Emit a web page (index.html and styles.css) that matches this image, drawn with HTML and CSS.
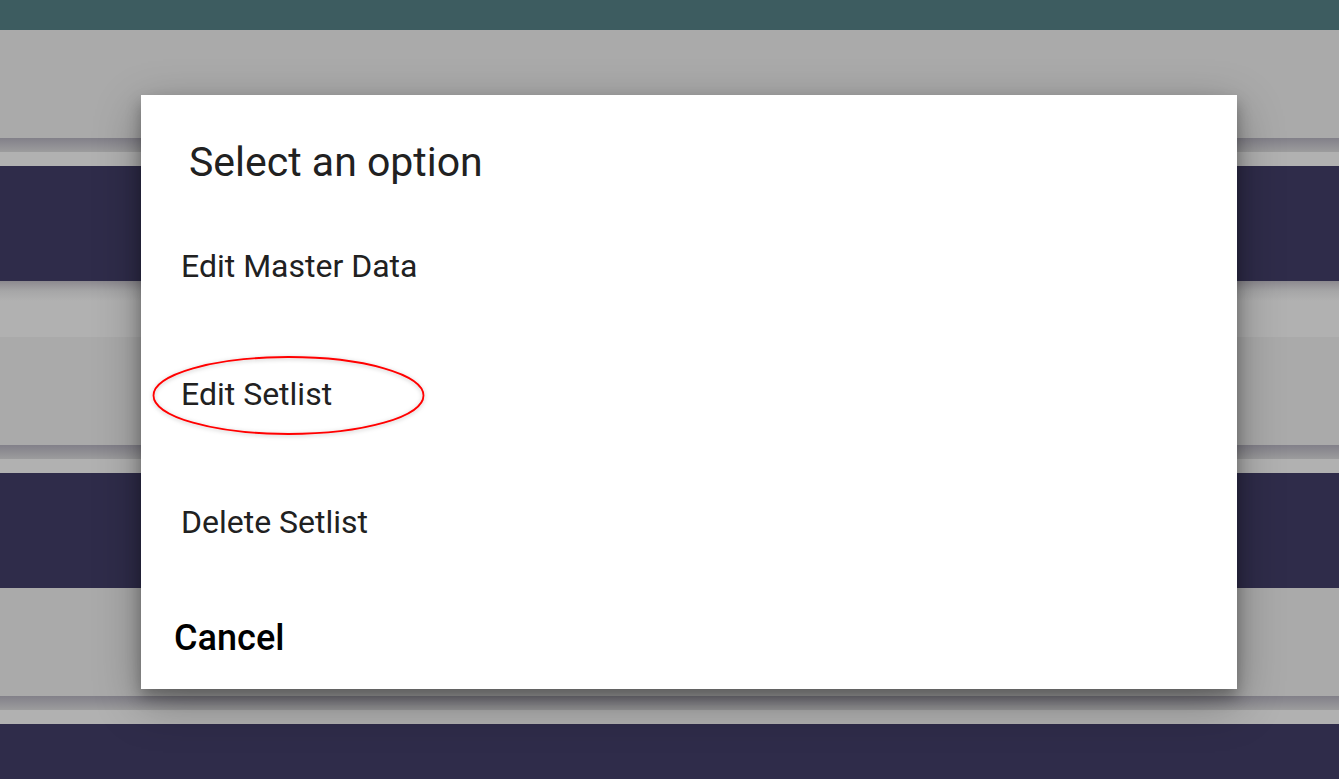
FILE: index.html
```html
<!DOCTYPE html>
<html>
<head>
<meta charset="utf-8">
<link rel="stylesheet" href="styles.css">
</head>
<body>
<div class="screen">
  <div class="topbar"></div>
  <div class="card"></div>
  <div class="band"></div>
  <div class="strip"></div>
  <div class="navy"></div>
  <div class="card-light"></div>
  <div class="card"></div>
  <div class="band"></div>
  <div class="strip"></div>
  <div class="navy"></div>
  <div class="card"></div>
  <div class="band"></div>
  <div class="strip"></div>
  <div class="navy navy-end"></div>
</div>

<div class="dialog">
  <div class="dialog-title">Select an option</div>
  <div class="options">
    <div class="option">Edit Master Data</div>
    <div class="option">Edit Setlist</div>
    <div class="option">Delete Setlist</div>
  </div>
  <div class="actions">
    <span class="cancel">Cancel</span>
  </div>
</div>

<svg class="marker" width="280" height="86" viewBox="0 0 280 86">
  <defs>
    <filter id="soft" x="-10%" y="-20%" width="120%" height="140%">
      <feDropShadow dx="0" dy="1" stdDeviation="2" flood-color="#000" flood-opacity="0.25"/>
    </filter>
  </defs>
  <ellipse cx="135.5" cy="39.5" rx="135" ry="38.5" fill="none" stroke="#ff0000" stroke-width="1.8" filter="url(#soft)"/>
</svg>
</body>
</html>
```

FILE: styles.css
```css
html, body {
  margin: 0;
  padding: 0;
}
body {
  width: 1339px;
  height: 779px;
  overflow: hidden;
  position: relative;
  font-family: Roboto, "Noto Sans", "Liberation Sans", sans-serif;
  background: #2f2c4a;
}
.screen {
  display: flex;
  flex-direction: column;
  height: 779px;
}
.topbar {
  height: 30px;
  background: #3d5c60;
  flex: none;
}
.card {
  height: 108px;
  background: #aaaaaa;
  flex: none;
}
.card-light {
  height: 56px;
  flex: none;
  background: linear-gradient(#8c898f 0px, #a6a6a7 10px, #b1b1b1 20px, #b1b1b1 100%);
}
.band {
  height: 14px;
  flex: none;
  background: linear-gradient(#828089, #9c9c9d);
}
.strip {
  height: 14px;
  flex: none;
  background: #b1b1b1;
}
.navy {
  height: 115px;
  flex: none;
  background: #2f2c4a;
}
.navy-end {
  flex: 1;
}

.dialog {
  position: absolute;
  left: 141px;
  top: 95px;
  width: 1096px;
  height: 594px;
  background: #ffffff;
  box-shadow: 0 8px 14px rgba(0, 0, 0, 0.28), 0 14px 44px rgba(0, 0, 0, 0.32);
  display: flex;
  flex-direction: column;
  box-sizing: border-box;
  padding-top: 43px;
}
.dialog-title {
  font-size: 41px;
  line-height: 48px;
  color: #212121;
  padding-left: 48px;
  margin-bottom: 16px;
}
.options {
  display: flex;
  flex-direction: column;
}
.option {
  height: 128px;
  line-height: 128px;
  font-size: 32px;
  color: #212121;
  padding-left: 40px;
}
.actions {
  flex: 1;
  display: flex;
  align-items: center;
  padding-left: 33px;
}
.cancel {
  font-family: "Roboto Medium", Roboto, "Noto Sans", sans-serif;
  font-size: 36px;
  font-weight: 500;
  color: #000000;
  line-height: 44px;
}

.marker {
  position: absolute;
  left: 153px;
  top: 356px;
  overflow: visible;
}
```
